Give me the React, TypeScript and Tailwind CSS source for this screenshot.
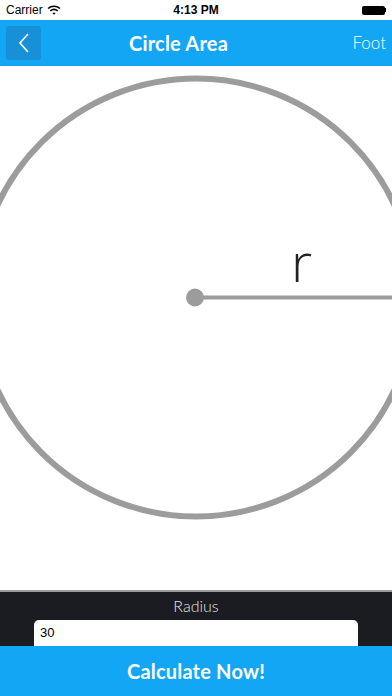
import React from "react";

export default function App() {
  return (
    <div className="w-[392px] h-[696px] flex flex-col bg-white overflow-hidden" style={{ fontFamily: "Lato, 'Open Sans', sans-serif" }}>
      {/* status bar */}
      <div className="h-[20px] flex items-center justify-between px-[6px] text-[12px] text-black relative" style={{ fontFamily: "'Liberation Sans', Arial, sans-serif" }}>
        <div className="flex items-center gap-[4px]">
          <span>Carrier</span>
          <svg width="14" height="10" viewBox="0 0 14 10">
            <path d="M1 3.5 A9 9 0 0 1 13 3.5" stroke="black" strokeWidth="1.6" fill="none" />
            <path d="M3.3 5.8 A6 6 0 0 1 10.7 5.8" stroke="black" strokeWidth="1.6" fill="none" />
            <path d="M5.4 8 L7 9.8 L8.6 8 A2.6 2.6 0 0 0 5.4 8 Z" fill="black" />
          </svg>
        </div>
        <span className="absolute left-1/2 -translate-x-1/2 font-bold">4:13 PM</span>
        <div className="flex items-center">
          <div className="w-[23px] h-[9px] bg-black rounded-[2px]" />
          <div className="w-[1.5px] h-[4px] bg-black" />
        </div>
      </div>
      {/* header */}
      <div className="h-[46px] bg-[#12a6f5] flex items-center pl-[6px] pr-[6px]">
        <div className="w-[35px] h-[34px] bg-[#1790d8] rounded-[3px] flex items-center justify-center">
          <svg width="14" height="22" viewBox="0 0 14 22">
            <path d="M11 2 L3 11 L11 20" stroke="white" strokeWidth="1.6" fill="none" />
          </svg>
        </div>
        <span className="ml-[88px] text-white font-bold text-[20px] tracking-[0.2px]">Circle Area</span>
        <span className="ml-auto text-white text-[17px] font-light">Foot</span>
      </div>
      {/* diagram */}
      <div className="flex-1 relative bg-white">
        <svg className="absolute inset-0" width="392" height="524" viewBox="0 66 392 524">
          <circle cx="196" cy="297.5" r="219" stroke="#9c9c9c" strokeWidth="6" fill="none" />
          <line x1="196" y1="297.5" x2="392" y2="297.5" stroke="#9c9c9c" strokeWidth="4" />
          <circle cx="195" cy="297.5" r="9" fill="#9c9c9c" />
        </svg>
        <span className="absolute left-[291px] top-[168px] text-[54px] text-[#222] leading-none" style={{ fontFamily: "'Open Sans', sans-serif", fontWeight: 300 }}>r</span>
      </div>
      {/* radius panel */}
      <div className="h-[56px] bg-[#1b1c21] border-t-2 border-[#9a9a9a] flex flex-col items-center">
        <span className="text-[#e4e4e4] text-[16px] font-light leading-none mt-[6px]">Radius</span>
        <div className="mt-[6px] w-[324px] h-[28px] bg-white rounded-t-[5px] flex items-center px-[6px] text-[13px] text-black" style={{ fontFamily: "'Liberation Sans', Arial, sans-serif" }}>30</div>
      </div>
      {/* button */}
      <div className="h-[50px] bg-[#12a6f5] flex items-center justify-center">
        <span className="text-white font-bold text-[20px] tracking-[0.2px]">Calculate Now!</span>
      </div>
    </div>
  );
}
